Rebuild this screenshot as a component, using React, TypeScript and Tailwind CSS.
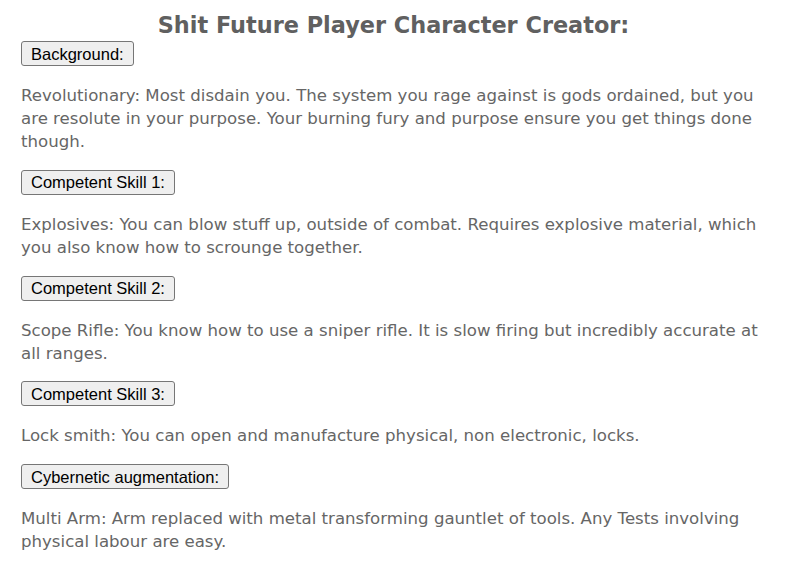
import React from 'react';

const sections = [
  {
    label: 'Background:',
    text: 'Revolutionary: Most disdain you. The system you rage against is gods ordained, but you are resolute in your purpose. Your burning fury and purpose ensure you get things done though.',
  },
  {
    label: 'Competent Skill 1:',
    text: 'Explosives: You can blow stuff up, outside of combat. Requires explosive material, which you also know how to scrounge together.',
  },
  {
    label: 'Competent Skill 2:',
    text: 'Scope Rifle: You know how to use a sniper rifle. It is slow firing but incredibly accurate at all ranges.',
  },
  {
    label: 'Competent Skill 3:',
    text: 'Lock smith: You can open and manufacture physical, non electronic, locks.',
  },
  {
    label: 'Cybernetic augmentation:',
    text: 'Multi Arm: Arm replaced with metal transforming gauntlet of tools. Any Tests involving physical labour are easy.',
  },
];

export default function App() {
  return (
    <div className="min-h-screen bg-white px-[21px] pt-[10px] text-[#666] font-['DejaVu_Sans',sans-serif]">
      <h1 className="text-center text-[22.4px] font-bold leading-[30px] text-[#606060]">
        Shit Future Player Character Creator:
      </h1>
      {sections.map((s) => (
        <div key={s.label} className="flex flex-col items-start">
          <button className="mt-px h-[25px] rounded-[3px] border border-[#767676] bg-[#efefef] px-[9px] text-[16.5px] leading-[20px] text-black font-['Liberation_Sans',Arial,sans-serif]">
            {s.label}
          </button>
          <p className="mt-[18px] mb-[15.75px] text-[16.6px] leading-[23px]">{s.text}</p>
        </div>
      ))}
    </div>
  );
}
